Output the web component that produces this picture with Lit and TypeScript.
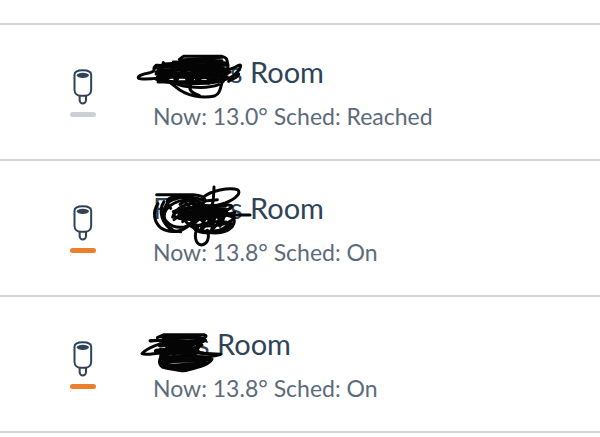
import { LitElement, css, html, svg, type TemplateResult } from "lit";
import { customElement, property } from "lit/decorators.js";
import { classMap } from "lit/directives/class-map.js";

interface Room {
  initial: string;
  size: string;
  temperature: string;
  schedule: string;
  heating: boolean;
  viewBox: string;
  strokes: string[];
}

const rooms: Room[] = [
  {
    initial: "",
    size: "long",
    temperature: "13.0°",
    schedule: "Reached",
    heating: false,
    viewBox: "0 0 390 195",
    strokes: [
      "M148 40 L160 31 H276 Q296 36 290 52 C284 66 180 62 80 58",
      "M276 34 L150 42 L276 44 L100 54 L290 58",
      "M78 58 C62 70 84 74 60 80 C34 84 20 92 26 97 C42 104 90 94 180 90 C240 88 300 74 326 58 C338 52 330 72 316 84 C296 104 240 116 180 112 C130 110 96 102 76 98",
      "M76 66 C130 54 230 56 290 70 C250 84 130 80 78 78 C130 92 240 70 300 78 C260 104 150 96 78 84",
      "M80 100 C110 118 250 114 282 96 C250 84 150 100 108 88 C140 76 240 94 282 86",
      "M92 104 L130 66 L136 110 L164 62 L172 112 L194 62 L204 112 L228 64 L236 112 L262 66 L250 108 L286 70",
      "M84 72 H286 M82 92 H292 M84 108 L280 106",
      "M90 64 L280 66 M130 48 L284 50 M196 54 L200 108 M216 60 L180 110 M150 60 L186 106",
      "M100 50 C86 82 112 104 136 122 C170 152 220 158 254 150 C272 142 270 126 278 104 C286 82 300 66 292 50",
      "M182 116 C174 128 184 142 208 148 M136 112 C160 124 230 130 266 116",
      "M296 106 C310 94 322 98 326 84",
    ],
  },
  {
    initial: "F",
    size: "long",
    temperature: "13.8°",
    schedule: "On",
    heating: true,
    viewBox: "0 3 390 195",
    strokes: [
      "M80 41 H190 C232 44 236 66 202 72",
      "M252 18 L250 56 C246 80 238 90 222 86 M216 52 C240 28 300 18 322 26 C336 34 318 54 286 66 L232 82",
      "M84 68 C66 94 72 124 94 142 C126 162 166 148 184 126 C202 102 200 66 178 60 C150 52 112 72 104 96 C96 126 116 152 152 152",
      "M122 82 C92 48 134 42 170 52 C208 62 206 96 186 124 C170 144 132 144 112 124 C90 104 100 60 142 52",
      "M136 54 C160 42 200 48 224 60 L262 56 M150 70 C170 52 200 54 222 72 M102 62 C84 90 96 130 126 144",
      "M128 108 C134 84 172 60 208 70 C246 82 280 64 304 74 C312 84 266 98 220 96 C170 94 134 82 132 104 C144 122 250 118 314 94",
      "M130 92 C170 74 240 78 290 86 C280 106 210 114 160 104 C180 88 276 92 314 110 C300 132 230 142 178 128",
      "M164 118 C194 158 278 168 306 138 C326 112 296 90 260 92 C214 94 172 122 194 144 C220 166 284 152 300 124",
      "M166 64 L220 124 L218 70 L242 132 L260 74 L270 136 L292 86 L236 100 L300 102 H360",
      "M132 116 L178 80 L158 122 L204 84 L184 134 L232 94 L212 148 L256 104 L244 150 L284 102",
      "M194 140 C230 120 280 116 308 130 C280 154 230 154 196 146",
      "M204 138 C190 162 196 190 214 192 C232 190 240 172 232 148",
      "M150 112 L228 108 M146 98 L250 96 M160 84 L270 88 M190 76 H286 M150 104 L262 104",
    ],
  },
  {
    initial: "",
    size: "short",
    temperature: "13.8°",
    schedule: "On",
    heating: true,
    viewBox: "0 -9 390 195",
    strokes: [
      "M82 50 L102 41 H222 C238 44 222 56 190 60 C144 66 92 54 62 60",
      "M60 59 C100 56 118 60 92 68 C68 76 46 86 36 98 C52 104 130 92 216 62",
      "M92 48 C140 44 188 46 222 52 C190 66 130 60 88 70 C130 84 190 60 216 72 C180 92 120 82 78 88",
      "M76 90 C112 104 170 88 206 78 M88 74 L226 58 M100 66 L194 84 M92 84 L206 92",
      "M100 54 L210 50 M120 72 L190 70 M110 80 L180 78 M104 96 L196 98",
      "M92 102 C130 92 200 94 272 100 C240 112 140 110 92 106",
      "M100 104 L132 54 L130 106 L160 60 L158 112 L184 64 L190 116 L210 68",
      "M94 106 C84 122 88 136 104 140 C140 146 158 154 176 146 C210 138 238 130 246 114 C220 102 130 104 94 112",
      "M94 124 C130 106 190 106 238 110 C210 130 130 136 92 130 C126 118 190 118 226 124 C190 144 130 144 98 138",
      "M98 116 H238 M96 122 L228 118 M102 134 L210 130 M116 142 L190 136",
      "M226 58 C200 70 184 92 220 96",
    ],
  },
];

@customElement("valve-icon")
export class ValveIcon extends LitElement {
  @property({ type: Boolean }) heating = false;

  render(): TemplateResult {
    return html`
      <svg class="valve" viewBox="70 56 60 108" aria-hidden="true">
        <path
          d="M74.5 73C74.5 64 86 59.5 99.5 59.5S124.5 64 124.5 73V118C124.5 129 117 136 106 136H93C82 136 74.5 129 74.5 118Z"
        />
        <path d="M90 137V150a9.5 9.5 0 0 0 19 0V137" />
        <ellipse class="cap" cx="99.5" cy="75" rx="18" ry="8" />
      </svg>
      <span class=${classMap({ bar: true, on: this.heating })}></span>
    `;
  }

  static styles = css`
    :host {
      display: flex;
      flex-direction: column;
      align-items: center;
      gap: 7px;
    }

    .valve {
      width: 20px;
      height: 36px;
      fill: none;
      stroke: #2f4358;
      stroke-width: 6;
    }

    .cap {
      fill: #2f4358;
      stroke: none;
    }

    .bar {
      width: 26px;
      height: 5px;
      border-radius: 3px;
      background: #cbd0d5;
    }

    .on {
      background: #ec7f2e;
    }
  `;
}

@customElement("app-root")
export class AppRoot extends LitElement {
  private renderRoom(room: Room): TemplateResult {
    return html`
      <li class="room">
        <valve-icon ?heating=${room.heating}></valve-icon>
        <div class="details">
          <h2 class="name">
            <span class="hidden-name ${room.size}">
              ${room.initial}
              <svg class="scribble" viewBox=${room.viewBox} aria-hidden="true">
                ${room.strokes.map((d) => svg`<path d=${d} />`)}
              </svg>
            </span>
            <span>s Room</span>
          </h2>
          <p class="status">
            Now: ${room.temperature} Sched: ${room.schedule}
          </p>
        </div>
      </li>
    `;
  }

  render(): TemplateResult {
    return html`<ul class="rooms">
      ${rooms.map((room) => this.renderRoom(room))}
    </ul>`;
  }

  static styles = css`
    :host {
      display: block;
      padding-top: 23px;
      background: #fff;
      color: #2f4358;
      font-family: Lato, "Open Sans", sans-serif;
    }

    .rooms {
      margin: 0;
      padding: 0;
      list-style: none;
      border-top: 2px solid #d3d4d8;
    }

    .room {
      display: grid;
      grid-template-columns: 26px 1fr;
      column-gap: 57px;
      align-items: center;
      padding: 29px 24px 27px 70px;
      border-bottom: 2px solid #d3d4d8;
    }

    .name {
      display: flex;
      margin: 0 0 10px;
      font-size: 29px;
      font-weight: 400;
      line-height: 36px;
    }

    .hidden-name {
      position: relative;
    }

    .long {
      width: 77px;
    }

    .short {
      width: 44px;
    }

    .scribble {
      position: absolute;
      top: -8px;
      left: -23px;
      width: 130px;
      height: 65px;
      fill: none;
      stroke: #050505;
      stroke-width: 9;
      stroke-linecap: round;
      stroke-linejoin: round;
    }

    .status {
      margin: 0;
      color: #5c6b7b;
      font-size: 23px;
      line-height: 32px;
    }
  `;
}

declare global {
  interface HTMLElementTagNameMap {
    "app-root": AppRoot;
    "valve-icon": ValveIcon;
  }
}
